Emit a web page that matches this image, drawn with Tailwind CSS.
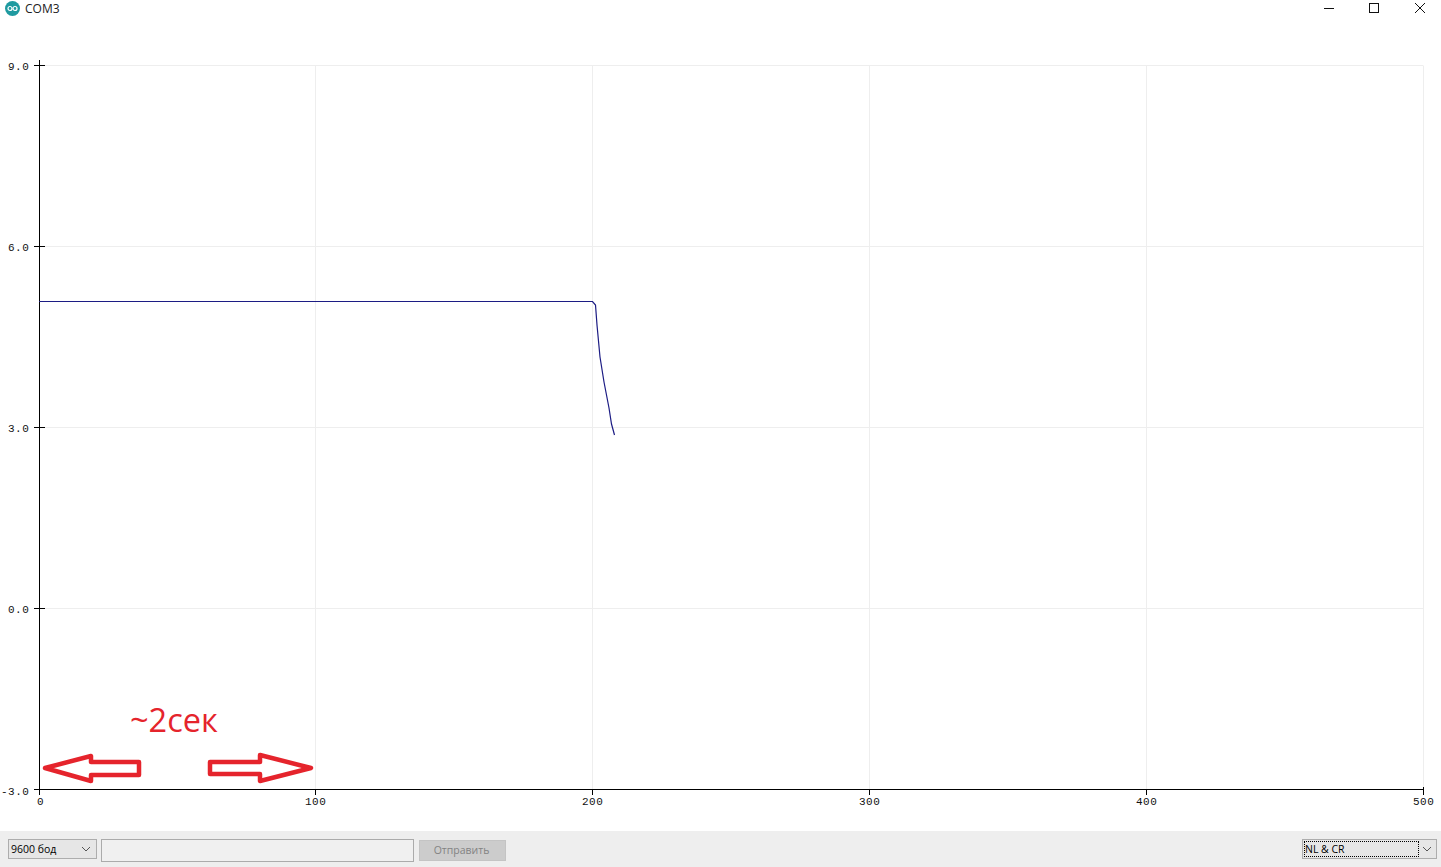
<!DOCTYPE html>
<html lang="en">

<head>
   <meta charset="UTF-8">
   <meta name="viewport" content="width=device-width, initial-scale=1.0">
   <title>COM3</title>
   <script src="https://cdn.jsdelivr.net/npm/@tailwindcss/browser@4"></script>
</head>

<body class="bg-white">
   <div class="w-[1441px] h-[867px] flex flex-col overflow-hidden font-['Open_Sans',sans-serif]">
      <!-- title bar -->
      <div class="h-[30px] shrink-0 relative">
         <div class="flex items-center h-[16px] pl-[5px] gap-[5px]">
            <svg width="15" height="15" viewBox="0 0 15 15">
               <circle cx="7.5" cy="7.5" r="7.5" fill="#1f9aa0" />
               <circle cx="5" cy="7.5" r="2" fill="none" stroke="#fff" stroke-width="1.2" />
               <circle cx="10" cy="7.5" r="2" fill="none" stroke="#fff" stroke-width="1.2" />
            </svg>
            <span class="text-[12px] text-[#222] leading-none mt-[1px]">COM3</span>
         </div>
         <div class="absolute top-0 right-0 flex items-center">
            <svg width="141" height="18" viewBox="1300 0 141 18" stroke="#111" fill="none" stroke-width="1">
               <path d="M1324 8.5h10" />
               <rect x="1369.5" y="3.5" width="9" height="9" />
               <path d="M1415 3l10 10M1425 3l-10 10" />
            </svg>
         </div>
      </div>

      <!-- plot -->
      <svg class="block flex-1 w-full" width="1441" height="801" viewBox="0 30 1441 801">
         <g stroke="#eeeeee" stroke-width="1" fill="none">
            <path d="M315.5 65.5V789M592.5 65.5V789M869.5 65.5V789M1146.5 65.5V789M1423.5 65.5V789" />
            <path d="M39 65.5H1423M39 246.5H1423M39 427.5H1423M39 608.5H1423" />
         </g>
         <g stroke="#000" stroke-width="1" fill="none">
            <path d="M39.5 60V795M34 65.5H45M34 246.5H45M34 427.5H45M34 608.5H45M34 789.5H1424" />
            <path d="M315.5 789V795M592.5 789V795M869.5 789V795M1146.5 789V795M1423.5 787V795" />
         </g>
         <g font-family="'Liberation Mono', monospace" font-size="11" fill="#111" letter-spacing="0.5">
            <text x="8" y="70">9.0</text>
            <text x="8" y="251">6.0</text>
            <text x="8" y="432">3.0</text>
            <text x="8" y="613">0.0</text>
            <text x="1" y="795">-3.0</text>
            <text x="37" y="805">0</text>
            <text x="305" y="805">100</text>
            <text x="582" y="805">200</text>
            <text x="859" y="805">300</text>
            <text x="1136" y="805">400</text>
            <text x="1413" y="805">500</text>
         </g>
         <polyline points="39,301.5 592.5,301.5 595.5,305 597,325 600,357 604,382 609,408 611.5,424 614.5,435" fill="none" stroke="#1c1c84" stroke-width="1.2" />
         <text x="130" y="732" font-family="'Open Sans', sans-serif" font-size="32.5" fill="#e5242c">~2сек</text>
         <g fill="none" stroke="#e5242c" stroke-width="4.5" stroke-linejoin="round">
            <polygon points="45,768 91,756 91,762 139,762 139,775 91,775 91,781" />
            <polygon points="210,762 260,762 260,755 311,768 260,781 260,774 210,774" />
         </g>
      </svg>

      <!-- bottom bar -->
      <div class="h-[36px] shrink-0 bg-[#eeeeee] flex items-start pt-[8px] pl-[8px] pr-[4px] text-[10.5px] text-black">
         <div class="w-[89px] h-[20px] border border-[#adadad] bg-[#e6e6e6] flex items-center justify-between pl-[2px] pr-[5px]">
            <span class="leading-none">9600 бод</span>
            <svg width="10" height="6" viewBox="0 0 10 6" fill="none" stroke="#555"><path d="M1 1l4 4 4-4" /></svg>
         </div>
         <input class="ml-[4px] w-[313px] h-[23px] border border-[#ababab] bg-[#f0f0f0]" type="text">
         <button class="ml-[5px] mt-[1px] w-[87px] h-[21px] bg-[#cccccc] border border-[#c4c4c4] text-[#838383] leading-none pb-[1px] pr-[2px]" disabled>Отправить</button>
         <div class="ml-auto w-[135px] h-[20px] border border-[#adadad] bg-[#e6e6e6] flex items-center justify-between pl-[1px] pr-[4px]">
            <span class="w-[115px] h-[16px] border border-dotted border-black leading-[14px]">NL &amp; CR</span>
            <svg width="10" height="6" viewBox="0 0 10 6" fill="none" stroke="#555"><path d="M1 1l4 4 4-4" /></svg>
         </div>
      </div>
   </div>
</body>

</html>
